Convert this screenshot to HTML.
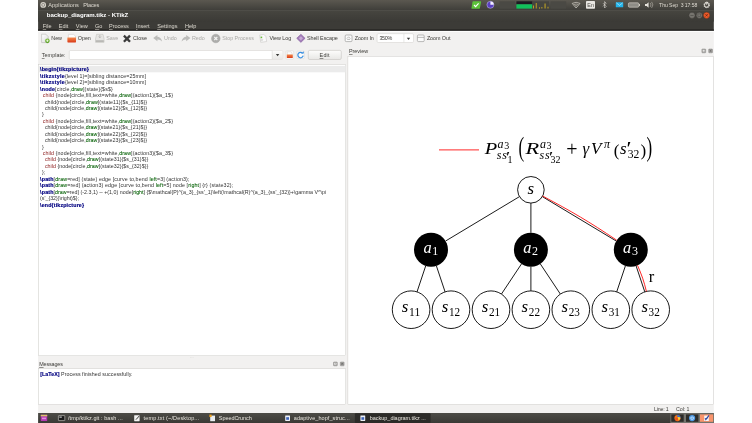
<!DOCTYPE html>
<html><head><meta charset="utf-8"><title>backup_diagram.tikz - KTikZ</title>
<style>
html,body{margin:0;padding:0;background:#fff;}
body{width:752px;height:423px;position:relative;overflow:hidden;font-family:"Liberation Sans","DejaVu Sans",sans-serif;font-size:5.35px;color:#3c3b37;}
.a{position:absolute;white-space:nowrap;line-height:1;}
.pt{color:#dfdbd2;font-size:5.6px;top:3.1px;}
.mt{color:#dfdbd2;font-size:5.55px;top:24.2px;}
.tb{top:36px;font-size:5.4px;color:#3c3b37;}
.dis{color:#aaa9a6;}
.lbl{font-size:5.4px;}
#code{left:40.1px;top:66.35px;font-size:5.3px;color:#333;}
#code div{height:6.45px;line-height:6.45px;white-space:pre;}
#code b{color:#000080;letter-spacing:0.17px;-webkit-text-stroke:0.18px #000080;}
#code i{font-style:normal;color:#8b1a1a;}
#code u{text-decoration:none;color:#0a640a;-webkit-text-stroke:0.07px #0a640a;}
.tk{color:#e9e6df;font-size:5.5px;top:415.9px;}
.ti{color:#fff;font-weight:bold;font-size:6.1px;top:11.7px;}
.msg{font-size:5.3px;color:#333;}
.msg b{color:#000080;-webkit-text-stroke:0.15px #000080;}
.st{font-size:5.3px;top:407.3px;}
.t u{text-decoration:underline;text-decoration-color:rgba(60,59,55,0.55);text-underline-offset:1.2px;}
.mt u{text-decoration-color:rgba(223,219,210,0.5);text-underline-offset:0.9px;}
#diagram{left:0;top:0;will-change:transform;}
#txt{left:0;top:0;width:752px;height:423px;will-change:transform;}
</style></head><body>
<svg class="a" id="bg" style="left:0;top:0" width="752" height="423" viewBox="0 0 752 423">
<defs>
<linearGradient id="gPanel" x1="0" y1="0" x2="0" y2="1"><stop offset="0" stop-color="#5b5850"/><stop offset="1" stop-color="#3f3e3a"/></linearGradient>
<linearGradient id="gTitle" x1="0" y1="0" x2="0" y2="1"><stop offset="0" stop-color="#474640"/><stop offset="1" stop-color="#3b3a36"/></linearGradient>
<linearGradient id="gTask" x1="0" y1="0" x2="0" y2="1"><stop offset="0" stop-color="#4c4b46"/><stop offset="1" stop-color="#3a3935"/></linearGradient>
<linearGradient id="gBtn" x1="0" y1="0" x2="0" y2="1"><stop offset="0" stop-color="#fdfdfc"/><stop offset="1" stop-color="#e8e7e5"/></linearGradient>
</defs>
<rect x="38.1" y="0" width="675.7" height="423" fill="#f2f1f0"/>
<rect x="38.1" y="0" width="675.7" height="30.9" fill="#3c3b37"/>
<rect x="38.1" y="0" width="675.7" height="10.1" fill="url(#gPanel)"/>
<rect x="38.1" y="10" width="675.7" height="11.6" fill="url(#gTitle)"/>
<rect x="38.1" y="10.1" width="675.7" height="0.6" fill="#54534d"/>
<rect x="38.1" y="29.3" width="675.7" height="1.6" fill="#262523"/>
<rect x="38.1" y="30.9" width="675.7" height="0.9" fill="#ffffff"/>
<!-- combobox zoom -->
<rect x="377.1" y="33.7" width="36.4" height="8.8" rx="1.2" fill="#fff" stroke="#cbc9c5" stroke-width="0.45"/>
<path d="M403.9 33.9v8.4" stroke="#c6c4bf" stroke-width="0.4"/>
<!-- template -->
<rect x="69.3" y="50.5" width="213.4" height="9" rx="1.2" fill="#fff" stroke="#cbc9c5" stroke-width="0.45"/>
<path d="M272.2 50.7h9.3q1 0 1 1v6.6q0 1-1 1h-9.3z" fill="url(#gBtn)"/>
<path d="M272.2 50.7v8.6" stroke="#c6c4bf" stroke-width="0.4"/>
<rect x="308.3" y="50.4" width="33" height="9.1" rx="1.4" fill="url(#gBtn)" stroke="#b7b5b0" stroke-width="0.45"/>
<rect x="285.9" y="50.8" width="7.8" height="8.4" rx="1" fill="#fbfbfa" stroke="#d2d0cc" stroke-width="0.4"/>
<!-- editor -->
<rect x="38.5" y="64.6" width="307.2" height="291.1" fill="#fff" stroke="#cbc9c5" stroke-width="0.45"/>
<rect x="38.8" y="65.9" width="306.6" height="6.4" fill="#ebebeb"/>
<!-- messages -->
<rect x="38.5" y="368.7" width="307.2" height="35.7" fill="#fff" stroke="#cbc9c5" stroke-width="0.45"/>
<!-- preview -->
<rect x="347.9" y="56.4" width="365.5" height="347.9" fill="#fff" stroke="#cbc9c5" stroke-width="0.45"/>
<!-- taskbar -->
<rect x="38.1" y="413" width="675.7" height="10" fill="url(#gTask)"/>
<rect x="354.9" y="413.3" width="75.7" height="9.7" rx="1" fill="#2c2b28"/>

</svg>
<div class="a" id="txt">
<div class="a t pt" style="left:48.3px;letter-spacing:0.036px;">Applications</div>
<div class="a t pt" style="left:83.2px;letter-spacing:-0.132px;">Places</div>
<div class="a t pt" style="left:659.1px;letter-spacing:-0.061px;font-size:5.1px;top:3.3px;">Thu Sep&nbsp; 3 17:58</div>
<div class="a t ti" style="left:46.8px;letter-spacing:-0.038px;">backup_diagram.tikz - KTikZ</div>
<div class="a t mt" style="left:42.8px;letter-spacing:-0.038px;"><u>F</u>ile</div>
<div class="a t mt" style="left:58.8px;letter-spacing:-0.041px;"><u>E</u>dit</div>
<div class="a t mt" style="left:75.8px;letter-spacing:0.018px;"><u>V</u>iew</div>
<div class="a t mt" style="left:95.0px;letter-spacing:-0.058px;"><u>G</u>o</div>
<div class="a t mt" style="left:109.0px;letter-spacing:-0.064px;"><u>P</u>rocess</div>
<div class="a t mt" style="left:136.0px;letter-spacing:-0.049px;"><u>I</u>nsert</div>
<div class="a t mt" style="left:157.2px;letter-spacing:0.033px;"><u>S</u>ettings</div>
<div class="a t mt" style="left:185.0px;letter-spacing:-0.005px;"><u>H</u>elp</div>
<div class="a t tb" style="left:51.3px;letter-spacing:-0.064px;">New</div>
<div class="a t tb" style="left:77.8px;letter-spacing:-0.048px;">Open</div>
<div class="a t tb dis" style="left:106.2px;letter-spacing:-0.069px;">Save</div>
<div class="a t tb" style="left:133.1px;letter-spacing:0.022px;">Close</div>
<div class="a t tb dis" style="left:164.0px;letter-spacing:-0.025px;">Undo</div>
<div class="a t tb dis" style="left:192.0px;letter-spacing:-0.025px;">Redo</div>
<div class="a t tb dis" style="left:222.2px;letter-spacing:-0.037px;">Stop Process</div>
<div class="a t tb" style="left:269.4px;letter-spacing:-0.022px;">View Log</div>
<div class="a t tb" style="left:306.9px;letter-spacing:-0.047px;">Shell Escape</div>
<div class="a t tb" style="left:354.8px;letter-spacing:-0.126px;">Zoom In</div>
<div class="a t tb" style="left:379.4px;letter-spacing:-0.321px;">350%</div>
<div class="a t tb" style="left:426.9px;letter-spacing:-0.059px;">Zoom Out</div>
<div class="a t lbl" style="left:41.8px;top:52.7px;letter-spacing:0.045px;"><u>T</u>emplate:</div>
<div class="a t lbl" style="left:319.6px;top:52.7px;letter-spacing:0.177px;"><u>E</u>dit</div>
<div class="a t lbl" style="left:39.2px;top:361.6px;letter-spacing:-0.122px;"><u>M</u>essages</div>
<div class="a t lbl" style="left:349.0px;top:48.9px;letter-spacing:-0.027px;"><u>P</u>review</div>
<div class="a t msg" style="left:40.2px;top:371.9px;letter-spacing:0.051px;"><b>[LaTeX]</b> Process finished successfully.</div>
<div class="a t st" style="left:653.9px;letter-spacing:-0.185px;">Line: 1</div>
<div class="a t st" style="left:676.1px;letter-spacing:-0.089px;">Col: 1</div>
<div class="a t tk" style="left:68.0px;letter-spacing:0.064px;">/tmp/ktikz.git : bash ...</div>
<div class="a t tk" style="left:143.6px;letter-spacing:0.153px;">temp.txt (~/Desktop...</div>
<div class="a t tk" style="left:218.8px;letter-spacing:-0.057px;">SpeedCrunch</div>
<div class="a t tk" style="left:293.8px;letter-spacing:0.085px;">adaptive_hopf_struc...</div>
<div class="a t tk" style="left:369.8px;letter-spacing:-0.029px;">backup_diagram.tikz ...</div>
<div class="a" id="code">
<div style="padding-left:0.0px;letter-spacing:-0.006px"><b style="letter-spacing:0.138px">\begin{tikzpicture}</b></div>
<div style="padding-left:0.0px;letter-spacing:0.066px"><b style="letter-spacing:0.24px">\tikzstyle</b>{level 1}=[sibling distance=25mm]</div>
<div style="padding-left:0.0px;letter-spacing:0.066px"><b style="letter-spacing:0.24px">\tikzstyle</b>{level 2}=[sibling distance=10mm]</div>
<div style="padding-left:0.0px;letter-spacing:0.094px"><b>\node</b>[circle,<u>draw</u>](state){$s$}</div>
<div style="padding-left:2.7px;letter-spacing:0.093px"><i>child</i> {node[circle,fill,text=white,<u>draw</u>](action1){$a_1$}</div>
<div style="padding-left:4.8px;letter-spacing:0.076px">child{node[circle,<u>draw</u>](state11){$s_{11}$}}</div>
<div style="padding-left:4.8px;letter-spacing:0.057px">child{node[circle,<u>draw</u>](state12){$s_{12}$}}</div>
<div style="padding-left:1.9px;letter-spacing:0.000px">}</div>
<div style="padding-left:2.7px;letter-spacing:0.093px"><i>child</i> {node[circle,fill,text=white,<u>draw</u>](action2){$a_2$}</div>
<div style="padding-left:4.8px;letter-spacing:0.057px">child{node[circle,<u>draw</u>](state21){$s_{21}$}}</div>
<div style="padding-left:4.8px;letter-spacing:0.057px">child{node[circle,<u>draw</u>](state22){$s_{22}$}}</div>
<div style="padding-left:4.8px;letter-spacing:0.057px">child{node[circle,<u>draw</u>](state23){$s_{23}$}}</div>
<div style="padding-left:1.9px;letter-spacing:0.000px">}</div>
<div style="padding-left:2.7px;letter-spacing:0.093px"><i>child</i> {node[circle,fill,text=white,<u>draw</u>](action3){$a_3$}</div>
<div style="padding-left:4.8px;letter-spacing:0.047px"><i>child</i> {node[circle,<u>draw</u>](state31){$s_{31}$}}</div>
<div style="padding-left:4.8px;letter-spacing:0.047px"><i>child</i> {node[circle,<u>draw</u>](state32){$s_{32}$}}</div>
<div style="padding-left:1.9px;letter-spacing:0.000px">};</div>
<div style="padding-left:0.0px;letter-spacing:0.112px"><b>\path</b>[<u>draw</u>=red] (state) edge [curve to,bend <u>left</u>=3] (action3);</div>
<div style="padding-left:0.0px;letter-spacing:0.123px"><b>\path</b>[<u>draw</u>=red] (action3) edge [curve to,bend <u>left</u>=5] node [<u>right</u>] {r} (state32);</div>
<div style="padding-left:0.0px;letter-spacing:0.018px"><b>\path</b>[<u>draw</u>=red] (-2.3,1) -- +(1,0) node[<u>right</u>] {$\mathcal{P}^{a_3}_{ss'_1}\left(\mathcal{R}^{a_3}_{ss'_{32}}+\gamma V^\pi</div>
<div style="padding-left:0.0px;letter-spacing:-0.021px">(s'_{32})\right)$};</div>
<div style="padding-left:0.0px;letter-spacing:0.008px"><b style="letter-spacing:0.15px">\end{tikzpicture}</b></div>
</div>
</div>
<svg class="a" id="diagram" width="752" height="423" viewBox="0 0 752 423">
<defs>
<linearGradient id="gOr" x1="0" y1="0" x2="0" y2="1"><stop offset="0" stop-color="#f58a4c"/><stop offset="1" stop-color="#d93a17"/></linearGradient>
<linearGradient id="gGr" x1="0" y1="0" x2="0" y2="1"><stop offset="0" stop-color="#8fd14a"/><stop offset="1" stop-color="#4a9a14"/></linearGradient>
<linearGradient id="gPa" x1="0" y1="0" x2="1" y2="1"><stop offset="0" stop-color="#ffffff"/><stop offset="1" stop-color="#dcdcdc"/></linearGradient>
</defs>
<!-- top panel: ubuntu logo -->
<circle cx="43.2" cy="4.9" r="2.9" fill="#d6d2c9"/>
<circle cx="43.2" cy="4.9" r="1.5" fill="none" stroke="#6b6a64" stroke-width="0.6"/>
<!-- indicators -->
<path d="M473 1.2h7.4q0.9 0 0.7 0.9l-1.2 5.8q-0.2 0.9-1.1 0.9h-6.6q-0.9 0-0.7-0.9l1-5.8q0.1-0.9 0.5-0.9z" fill="#5cc23a"/>
<path d="M474 5l1.6 1.6 3-3.2" fill="none" stroke="#fff" stroke-width="1.1"/>
<circle cx="490.4" cy="4.8" r="3.5" fill="#5a3fc0" stroke="#cfc8f0" stroke-width="0.5"/>
<path d="M490.4 4.8V1.5A3.3 3.3 0 0 1 493.7 4.8z" fill="#f3f0ff"/>
<rect x="499.5" y="1.3" width="15.6" height="7.3" fill="#4a4944"/>
<rect x="516.4" y="1.3" width="16" height="3" fill="#1d1b22"/>
<rect x="516.4" y="4.3" width="16" height="4.3" fill="#11c15b"/>
<rect x="532.4" y="1.3" width="16.6" height="7.3" fill="#45443f"/>
<path d="M533 8.6V5.5h0.8V8.6zM535.8 8.6V3h0.8V8.6zM539 8.6V7.6h1V8.6zM541.5 8.6V7h0.8V8.6zM544.6 8.6V3.4h0.9V8.6zM547.6 8.6V6.8h0.8V8.6z" fill="#d8b51e"/>
<rect x="550.6" y="1.3" width="15.6" height="7.3" fill="#4a4944"/>
<path d="M572.2 3.4q3.9-2.2 7.8 0l-3.9 4.6z" fill="none" stroke="#d8d4cb" stroke-width="0.7"/>
<path d="M573.8 4.6q2.3-1.2 4.6 0M575 5.9q1.1-0.5 2.2 0" fill="none" stroke="#d8d4cb" stroke-width="0.6"/>
<rect x="586" y="1.1" width="9" height="7.6" rx="0.8" fill="#e8e6e1"/>
<text x="587.3" y="7" font-family="'Liberation Sans',sans-serif" font-size="5.4" fill="#4a4944">En</text>
<path d="M603 3.2l3.2 3.2-1.6 1.6V1.6l1.6 1.6-3.2 3.2" fill="none" stroke="#e0ddd6" stroke-width="0.6"/>
<rect x="615.8" y="2.3" width="7.4" height="5" rx="0.5" fill="#23b4ea"/>
<path d="M616.4 2.9l3.1 2.5 3.1-2.5" fill="none" stroke="#d9f3ff" stroke-width="0.6"/>
<rect x="628.4" y="2.8" width="10.4" height="4.4" rx="1" fill="#8e8c86" stroke="#d8d4cb" stroke-width="0.6"/>
<rect x="639.1" y="4" width="0.9" height="2" fill="#d8d4cb"/>
<path d="M645 4h1.6l2-1.8v5.6l-2-1.8H645z" fill="#e6e3dc"/>
<path d="M650.2 3q1.6 1.9 0 3.9M651.6 1.9q2.6 3 0 6" fill="none" stroke="#d8d4cb" stroke-width="0.5"/>
<circle cx="706.7" cy="5" r="2.5" fill="none" stroke="#e6e3dc" stroke-width="1.3" stroke-dasharray="1.2 0.76"/>
<circle cx="706.7" cy="5" r="2.2" fill="none" stroke="#e6e3dc" stroke-width="0.7"/>
<rect x="706.3" y="1.6" width="0.8" height="3.2" fill="#e6e3dc"/>
<!-- window buttons -->
<circle cx="692" cy="15.3" r="3.1" fill="#76746e" stroke="#2f2e2b" stroke-width="0.4"/>
<rect x="690.4" y="15" width="3.2" height="0.7" fill="#4e4d48"/>
<circle cx="699.3" cy="15.3" r="3.1" fill="#76746e" stroke="#2f2e2b" stroke-width="0.4"/>
<rect x="697.9" y="13.9" width="2.8" height="2.8" fill="none" stroke="#4e4d48" stroke-width="0.6"/>
<circle cx="706.6" cy="15.3" r="3.1" fill="#ef5a29" stroke="#6b2a14" stroke-width="0.4"/>
<path d="M705.4 14.1l2.4 2.4M707.8 14.1l-2.4 2.4" stroke="#5a1f0e" stroke-width="0.7"/>
<!-- toolbar: new -->
<path d="M41.6 34.2h4.2l2.4 2.4v6h-6.6z" fill="url(#gPa)" stroke="#a9a8a5" stroke-width="0.5"/>
<circle cx="47.4" cy="40.8" r="2.1" fill="url(#gGr)" stroke="#4f8f16" stroke-width="0.3"/>
<path d="M46.2 40.8h2.4M47.4 39.6v2.4" stroke="#fff" stroke-width="0.7"/>
<!-- open -->
<path d="M68.4 34.4h5.2l1.9 1.8v3h-7.1z" fill="#fdfdfd" stroke="#c8c7c4" stroke-width="0.5"/>
<path d="M67.4 37.5h8.6v4.3q0 0.6-0.6 0.6h-7.4q-0.6 0-0.6-0.6z" fill="url(#gOr)"/>
<!-- save (disabled) -->
<path d="M96.6 34.3h6.4l1.1 4.6v3.4h-8.6v-3.4z" fill="#e6e5e3" stroke="#bdbcb9" stroke-width="0.5"/>
<path d="M99.8 35v2.6M98.6 36.6l1.2 1.3 1.2-1.3" fill="none" stroke="#b5b4b1" stroke-width="0.8"/>
<rect x="95.8" y="40.2" width="8" height="2" fill="#b9b8b5"/>
<!-- close -->
<path d="M123.9 35.6l6.1 6.1M130 35.6l-6.1 6.1" stroke="#3b3b3b" stroke-width="2.3"/>
<!-- undo/redo -->
<path d="M153.2 38l4.2-3v1.8q3.4 0 4.7 4.6q-2-2-4.7-1.8v1.6z" fill="#bcbcba"/>
<path d="M190.4 38l-4.2-3v1.8q-3.4 0-4.7 4.6q2-2 4.7-1.8v1.6z" fill="#bcbcba"/>
<!-- stop -->
<circle cx="215.8" cy="38.5" r="4.3" fill="#adadab" stroke="#9c9c9a" stroke-width="0.4"/>
<path d="M214.3 37l3 3M217.3 37l-3 3" stroke="#f4f4f3" stroke-width="1.1"/>
<!-- view log -->
<path d="M260.2 34.6h4l2 2v5.4h-6z" fill="#fafafa" stroke="#c4c3c0" stroke-width="0.5" transform="rotate(-8 263 38.5)"/>
<rect x="260.6" y="36.6" width="1.6" height="1.6" fill="#6dbb3c"/>
<path d="M260.8 39.4h2.4M260.8 40.6h2" stroke="#bdbcb9" stroke-width="0.5"/>
<!-- shell escape -->
<path d="M300.9 34.2l4.2 4.1-4.2 4.1-4.2-4.1z" fill="#a27bb8" stroke="#7d5796" stroke-width="0.5"/>
<path d="M300.9 36.2l2.1 2.1-2.1 2.1-2.1-2.1z" fill="#c7aad6"/>
<!-- zoom in / out -->
<rect x="345.2" y="35" width="6.8" height="6.6" rx="1" fill="#fbfbfb" stroke="#8f8f8d" stroke-width="0.6"/>
<path d="M346.8 38.6l1.8-1.8 1.8 1.8M347.2 39.4h2.8" fill="none" stroke="#8f8f8d" stroke-width="0.6"/>
<rect x="417.4" y="35" width="6.8" height="6.6" rx="1" fill="#fbfbfb" stroke="#8f8f8d" stroke-width="0.6"/>
<path d="M417.6 37.4h6.4" fill="none" stroke="#8f8f8d" stroke-width="0.6"/>
<!-- template row -->
<path d="M275.9 54.1h3.4l-1.7 2.1z" fill="#3a3a38"/>
<path d="M406.8 37.8h3.4l-1.7 2.1z" fill="#3a3a38"/>
<path d="M287.4 51.8h3.4l1.2 1.2v2h-4.6z" fill="#fdfdfd" stroke="#c8c7c4" stroke-width="0.4"/>
<path d="M286.8 54.4h6v3.2q0 0.5-0.5 0.5h-5q-0.5 0-0.5-0.5z" fill="url(#gOr)"/>
<rect x="296.8" y="51.2" width="7.6" height="7.4" rx="0.8" fill="#fbfbfb" stroke="#d0cfcc" stroke-width="0.4"/>
<path d="M302.6 53.3a2.7 2.7 0 1 0 0.6 2.4" fill="none" stroke="#3b8fe0" stroke-width="1.2"/>
<path d="M301.2 53.6h2.6v-2.4z" fill="#3b8fe0"/>
<!-- dock buttons -->
<g fill="#a3a2a0" stroke="#8a8987" stroke-width="0.5">
<rect x="701.9" y="49" width="3.8" height="3.8" rx="0.6"/><rect x="708.7" y="49" width="3.8" height="3.8" rx="0.6"/>
<rect x="333.5" y="362" width="3.8" height="3.8" rx="0.6"/><rect x="340.3" y="362" width="3.8" height="3.8" rx="0.6"/>
</g>
<g fill="none" stroke="#f2f1f0" stroke-width="0.5">
<rect x="703" y="50.1" width="1.6" height="1.6"/><path d="M709.7 50l1.8 1.8M711.5 50l-1.8 1.8" stroke="#4e4d4b"/>
<rect x="334.6" y="363.1" width="1.6" height="1.6"/><path d="M341.3 363l1.8 1.8M343.1 363l-1.8 1.8" stroke="#4e4d4b"/>
</g>
<g fill="#c9c8c5"><circle cx="190.7" cy="357.2" r="0.3"/><circle cx="191.9" cy="357.2" r="0.3"/><circle cx="193.1" cy="357.2" r="0.3"/></g>
<!-- taskbar icons -->
<rect x="40.8" y="414.8" width="6.4" height="6.2" rx="0.6" fill="#b13ab0"/>
<rect x="40.8" y="414.8" width="6.4" height="1.5" fill="#d9c56a"/>
<rect x="42" y="417.6" width="4" height="1.6" fill="#e08ee0"/>
<rect x="58.4" y="415.6" width="6.4" height="5" rx="0.4" fill="#1a1a1a" stroke="#d0cec8" stroke-width="0.6"/>
<rect x="59.4" y="416.6" width="2.4" height="1" fill="#e6e6e6"/>
<rect x="134.2" y="415.2" width="5.4" height="6" rx="0.4" fill="#f4f4f2"/>
<path d="M136 419.6l3.4-3.8" stroke="#3a3a3a" stroke-width="1"/>
<rect x="210.2" y="415.6" width="4.8" height="5.6" fill="#e9edf1"/>
<rect x="209.4" y="414.6" width="2.2" height="2.4" fill="#f0a21c"/>
<rect x="285.2" y="415.4" width="4.8" height="5.6" rx="0.4" fill="#eef1f7"/>
<rect x="286.2" y="417.2" width="2.8" height="2.6" fill="#3e63b8"/>
<rect x="360.4" y="415.4" width="4.8" height="5.6" rx="0.4" fill="#eef1f7"/>
<rect x="361.4" y="417.2" width="2.8" height="2.6" fill="#3e63b8"/>
<rect x="670.4" y="413.3" width="43.3" height="9.7" fill="#74736d"/>
<rect x="671.3" y="414.4" width="12.4" height="7.4" fill="#2d2c29"/>
<circle cx="677.5" cy="418.1" r="3.1" fill="#f0721c"/><path d="M677.5 415a3.1 3.1 0 0 1 3.1 3.1h-2.1a1.6 1.6 0 0 0-1.5-1.5z" fill="#2f6fd0"/><circle cx="678.9" cy="418.4" r="1.3" fill="#fbd32f"/><circle cx="676.6" cy="419" r="1.5" fill="#e8501a"/>
<rect x="686" y="414.4" width="12.4" height="7.4" fill="#2d2c29"/>
<circle cx="692.1" cy="418.1" r="3.1" fill="#4f9be6"/><circle cx="692.1" cy="418.1" r="1.7" fill="#dcecfb"/><circle cx="692.1" cy="418.1" r="0.9" fill="#4f9be6"/>
<rect x="700" y="414.4" width="13.2" height="7.4" fill="#f9946c"/>
<rect x="704.2" y="415.6" width="4.6" height="5.4" fill="#f6f6f6"/><path d="M705.4 420.2l3.6-4.8" stroke="#2d3f9c" stroke-width="1.1"/><path d="M704.8 418.5h2.5" stroke="#33479f" stroke-width="0.8"/>

<g font-family="'Liberation Serif','DejaVu Serif',serif">
<g fill="none" stroke="#000" stroke-width="0.9">
<line x1="519.5" y1="196.6" x2="445.6" y2="241.0"/>
<line x1="530.9" y1="203.1" x2="530.9" y2="232.8"/>
<line x1="542.3" y1="196.6" x2="616.2" y2="241.0"/>
<line x1="425.7" y1="265.9" x2="417.0" y2="291.9"/>
<line x1="436.4" y1="265.9" x2="445.1" y2="291.9"/>
<line x1="521.5" y1="263.9" x2="501.4" y2="294.1"/>
<line x1="530.9" y1="266.8" x2="530.9" y2="290.9"/>
<line x1="540.3" y1="263.9" x2="560.4" y2="294.1"/>
<line x1="625.4" y1="265.9" x2="616.7" y2="291.9"/>
<line x1="636.1" y1="265.9" x2="644.8" y2="291.9"/>
<circle cx="530.9" cy="189.8" r="13.3" fill="#fff"/>
<circle cx="411.1" cy="309.7" r="18.8" fill="#fff"/>
<circle cx="451.0" cy="309.7" r="18.8" fill="#fff"/>
<circle cx="491.0" cy="309.7" r="18.8" fill="#fff"/>
<circle cx="530.9" cy="309.7" r="18.8" fill="#fff"/>
<circle cx="570.8" cy="309.7" r="18.8" fill="#fff"/>
<circle cx="610.8" cy="309.7" r="18.8" fill="#fff"/>
<circle cx="650.7" cy="309.7" r="18.8" fill="#fff"/>
</g>
<circle cx="431.0" cy="249.8" r="17.0" fill="#000"/>
<circle cx="530.9" cy="249.8" r="17.0" fill="#000"/>
<circle cx="630.8" cy="249.8" r="17.0" fill="#000"/>
<g fill="none" stroke="#f00" stroke-width="0.85">
<path d="M542.6 196.0C572.4 211.9 588.7 221.4 616.7 240.2"/>
<path d="M637.5 265.3C641.8 275.2 643.9 280.9 646.4 291.4"/>
<line x1="439.0" y1="149.9" x2="479.0" y2="149.9"/>
</g>
<text x="527.5" y="194.0" font-size="16.8" font-style="italic" fill="#000" >s</text>
<text x="423.4" y="252.8" font-size="16.4" font-style="italic" fill="#fff" >a</text>
<text x="432.2" y="254.8" font-size="12" fill="#fff" >1</text>
<text x="523.3" y="252.8" font-size="16.4" font-style="italic" fill="#fff" >a</text>
<text x="532.1" y="254.8" font-size="12" fill="#fff" >2</text>
<text x="623.1" y="252.8" font-size="16.4" font-style="italic" fill="#fff" >a</text>
<text x="632.0" y="254.8" font-size="12" fill="#fff" >3</text>
<text x="401.8" y="312.1" font-size="16.8" font-style="italic" fill="#000" >s</text>
<text x="409.0" y="315.6" font-size="12" fill="#000" textLength="11.2" lengthAdjust="spacingAndGlyphs">11</text>
<text x="441.7" y="312.1" font-size="16.8" font-style="italic" fill="#000" >s</text>
<text x="448.9" y="315.6" font-size="12" fill="#000" textLength="11.2" lengthAdjust="spacingAndGlyphs">12</text>
<text x="481.7" y="312.1" font-size="16.8" font-style="italic" fill="#000" >s</text>
<text x="488.9" y="315.6" font-size="12" fill="#000" textLength="11.2" lengthAdjust="spacingAndGlyphs">21</text>
<text x="521.6" y="312.1" font-size="16.8" font-style="italic" fill="#000" >s</text>
<text x="528.8" y="315.6" font-size="12" fill="#000" textLength="11.2" lengthAdjust="spacingAndGlyphs">22</text>
<text x="561.5" y="312.1" font-size="16.8" font-style="italic" fill="#000" >s</text>
<text x="568.7" y="315.6" font-size="12" fill="#000" textLength="11.2" lengthAdjust="spacingAndGlyphs">23</text>
<text x="601.5" y="312.1" font-size="16.8" font-style="italic" fill="#000" >s</text>
<text x="608.7" y="315.6" font-size="12" fill="#000" textLength="11.2" lengthAdjust="spacingAndGlyphs">31</text>
<text x="641.4" y="312.1" font-size="16.8" font-style="italic" fill="#000" >s</text>
<text x="648.6" y="315.6" font-size="12" fill="#000" textLength="11.2" lengthAdjust="spacingAndGlyphs">32</text>
<text x="648.8" y="281.9" font-size="16.5" fill="#000" >r</text>
<text x="0.0" y="0.0" font-size="17" font-style="italic" fill="#000" transform="translate(484.8,154.3) scale(1.2,1)">P</text>
<text x="497.6" y="148.2" font-size="12" font-style="italic" fill="#000" >a</text>
<text x="504.3" y="148.9" font-size="10" fill="#000" >3</text>
<text x="496.8" y="158.8" font-size="12" font-style="italic" fill="#000" >s</text>
<text x="502.2" y="158.8" font-size="12" font-style="italic" fill="#000" >s</text>
<text x="506.0" y="162.3" font-size="15" fill="#000" font-weight="bold">′</text>
<text x="507.4" y="162.8" font-size="10" fill="#000" >1</text>
<text transform="translate(518.4,156.4) scale(1,1.55)" font-size="17">(</text>
<text x="0.0" y="0.0" font-size="17" font-style="italic" fill="#000" transform="translate(525.4,154.3) scale(1.32,1)">R</text>
<text x="540.0" y="148.2" font-size="12" font-style="italic" fill="#000" >a</text>
<text x="546.6" y="148.9" font-size="10" fill="#000" >3</text>
<text x="539.6" y="158.8" font-size="12" font-style="italic" fill="#000" >s</text>
<text x="545.0" y="158.8" font-size="12" font-style="italic" fill="#000" >s</text>
<text x="549.0" y="162.3" font-size="15" fill="#000" font-weight="bold">′</text>
<text x="550.6" y="162.8" font-size="10" fill="#000" >32</text>
<text x="566.2" y="156.0" font-size="20" fill="#000" >+</text>
<text x="582.4" y="154.3" font-size="17" font-style="italic" fill="#000" >γ</text>
<text x="591.0" y="154.3" font-size="17" font-style="italic" fill="#000" >V</text>
<text x="604.0" y="148.2" font-size="12" font-style="italic" fill="#000" >π</text>
<text x="613.8" y="155.9" font-size="17" fill="#000" >(</text>
<text x="620.0" y="154.3" font-size="17" font-style="italic" fill="#000" >s</text>
<text x="626.6" y="154.9" font-size="18" fill="#000" font-weight="bold">′</text>
<text x="627.8" y="158.0" font-size="11.6" fill="#000" >32</text>
<text x="640.6" y="155.9" font-size="17" fill="#000" >)</text>
<text transform="translate(646.6,156.4) scale(1,1.55)" font-size="17">)</text>
</g>
</svg>
</body></html>
